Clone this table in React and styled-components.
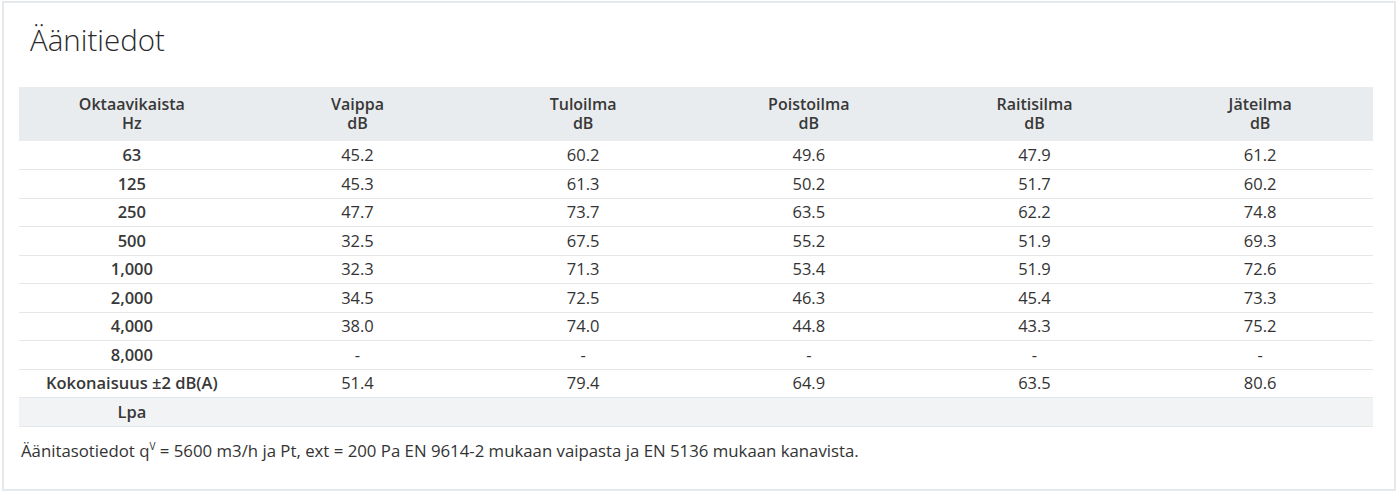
import React from "react";
import styled, { createGlobalStyle } from "styled-components";

const GlobalStyle = createGlobalStyle`
	body {
		margin: 0;
		background: #ffffff;
		font-family: "Open Sans", "Liberation Sans", sans-serif;
		color: #2a2a2a;
	}
`;

const Card = styled.section`
	margin: 1px 4px 0 2px;
	height: 490px;
	box-sizing: border-box;
	border: 2px solid #e6e9ec;
	padding: 0 21px 0 15px;
	background: #ffffff;
`;

const Title = styled.h2`
	margin: 0;
	padding: 17px 0 0 11px;
	height: 84px;
	box-sizing: border-box;
	font-size: 29.5px;
	font-weight: 300;
	line-height: 40px;
	color: #2a2a2a;
`;

const Table = styled.table`
	width: 100%;
	border-collapse: collapse;
	table-layout: fixed;
	font-size: 16.5px;
`;

const HeadRow = styled.tr`
	background: #e9ecee;
	height: 54px;
`;

const HeadCell = styled.th`
	font-weight: 600;
	font-size: 16px;
	line-height: 19px;
	padding: 0;
	text-align: center;
	vertical-align: middle;
	color: #383838;
`;

const Row = styled.tr`
	height: 28.5px;
	background: ${p => (p.$shaded ? "#f1f3f5" : "transparent")};
	border-bottom: 1px solid #e4e7ea;
`;

const Cell = styled.td`
	padding: 0;
	text-align: center;
	font-weight: ${p => (p.$label ? 600 : 400)};
	color: ${p => (p.$label ? "#383838" : "#333333")};
	line-height: 20px;
`;

const Note = styled.p`
	margin: 0;
	padding: 9px 0 0 2px;
	font-size: 16.8px;
	line-height: 20px;
	color: #333333;
`;

const Sup = styled.sup`
	font-size: 10px;
`;

const columns = ["Vaippa", "Tuloilma", "Poistoilma", "Raitisilma", "Jäteilma"];

const rows = [
	["63", "45.2", "60.2", "49.6", "47.9", "61.2"],
	["125", "45.3", "61.3", "50.2", "51.7", "60.2"],
	["250", "47.7", "73.7", "63.5", "62.2", "74.8"],
	["500", "32.5", "67.5", "55.2", "51.9", "69.3"],
	["1,000", "32.3", "71.3", "53.4", "51.9", "72.6"],
	["2,000", "34.5", "72.5", "46.3", "45.4", "73.3"],
	["4,000", "38.0", "74.0", "44.8", "43.3", "75.2"],
	["8,000", "-", "-", "-", "-", "-"],
	["Kokonaisuus ±2 dB(A)", "51.4", "79.4", "64.9", "63.5", "80.6"]
];

const App = () => {
	return (
		<React.Fragment>
			<GlobalStyle />
			<Card>
				<Title>Äänitiedot</Title>
				<Table>
					<thead>
						<HeadRow>
							<HeadCell>
								Oktaavikaista
								<br />
								Hz
							</HeadCell>
							{columns.map(name => (
								<HeadCell key={name}>
									{name}
									<br />
									dB
								</HeadCell>
							))}
						</HeadRow>
					</thead>
					<tbody>
						{rows.map(row => (
							<Row key={row[0]}>
								{row.map((value, i) => (
									<Cell key={i} $label={i === 0}>
										{value}
									</Cell>
								))}
							</Row>
						))}
						<Row $shaded>
							<Cell $label>Lpa</Cell>
							<Cell />
							<Cell />
							<Cell />
							<Cell />
							<Cell />
						</Row>
					</tbody>
				</Table>
				<Note>
					Äänitasotiedot q<Sup>V</Sup> = 5600 m3/h ja Pt, ext = 200 Pa EN
					9614-2 mukaan vaipasta ja EN 5136 mukaan kanavista.
				</Note>
			</Card>
		</React.Fragment>
	);
};

export default App;
